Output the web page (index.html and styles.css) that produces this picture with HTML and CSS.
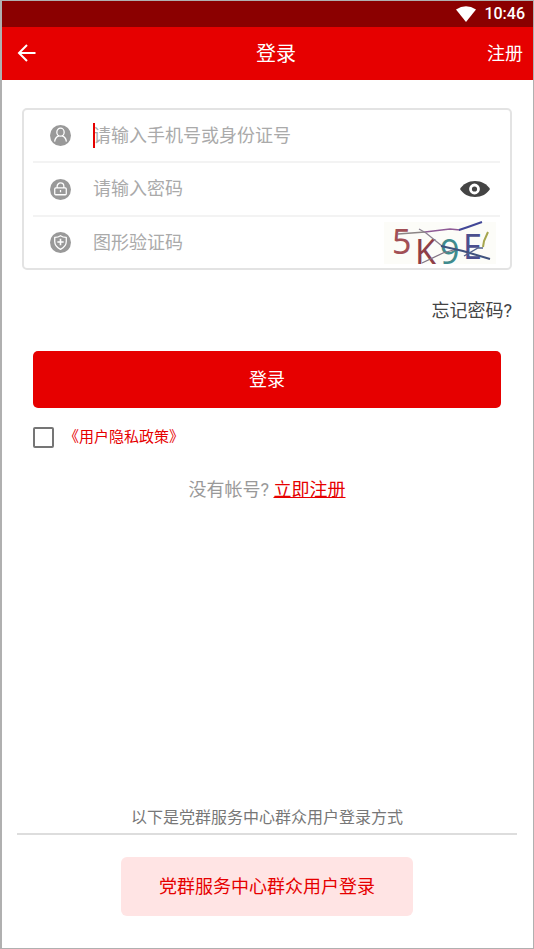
FILE: index.html
```html
<!DOCTYPE html>
<html lang="zh-CN">
<head>
<meta charset="utf-8">
<meta name="viewport" content="width=device-width, initial-scale=1">
<title>登录</title>
<link rel="stylesheet" href="styles.css">
</head>
<body>
<div class="status">
  <svg width="20" height="16" viewBox="0 0 20 16" aria-hidden="true"><path d="M0 3.600Q10-3.200 20 3.600L10 16Z" fill="#fff"/></svg>
  <span>10:46</span>
</div>
<header class="bar">
  <button class="back" type="button" aria-label="返回">
    <svg width="20" height="20" viewBox="0 0 20 20" fill="none" stroke="#fff" stroke-width="2"><path d="M18.500 9H2.500M10 1L2 9l8 8"/></svg>
  </button>
  <h1>登录</h1>
  <a href="#register">注册</a>
</header>
<main>
  <form>
    <div class="fields">
      <div class="row">
        <label for="account" aria-label="手机号或身份证号">
          <svg class="icon" viewBox="0 0 20 20"><circle cx="10" cy="10" r="10" fill="#999"/><g fill="none" stroke="#fff" stroke-width="1.200" stroke-linecap="round"><ellipse cx="10" cy="6.800" rx="3.500" ry="3.800"/><path d="M8.300 10.300C6 11.300 4.800 12.800 4.500 15.300M11.700 10.300c2.300 1 3.500 2.500 3.800 5"/></g></svg>
        </label>
        <div class="entry">
          <input id="account" type="text" placeholder="请输入手机号或身份证号">
          <span class="caret"></span>
        </div>
      </div>
      <div class="row">
        <label for="password" aria-label="密码">
          <svg class="icon" viewBox="0 0 20 20"><circle cx="10" cy="10" r="10" fill="#999"/><g fill="none" stroke="#fff" stroke-width="1.200" stroke-linejoin="round"><rect x="4.500" y="8.500" width="11" height="6.500" rx="1"/><path d="M6.800 8.500V7a3.200 3.200 0 0 1 6.400 0v1.500M10 10.500v2.200"/></g></svg>
        </label>
        <div class="entry"><input id="password" type="password" placeholder="请输入密码"></div>
        <button class="eye" type="button" aria-label="显示密码">
          <svg width="30" height="16" viewBox="0 0 30 16"><path d="M0 8C3 3 8.500 0 15 0s12 3 15 8c-3 5-8.500 8-15 8S3 13 0 8Z" fill="#444"/><circle cx="14.500" cy="8" r="4" fill="#444" stroke="#fff" stroke-width="2.800"/></svg>
        </button>
      </div>
      <div class="row">
        <label for="captcha" aria-label="图形验证码">
          <svg class="icon" viewBox="0 0 20 20"><circle cx="10" cy="10" r="10" fill="#999"/><g fill="none" stroke="#fff" stroke-width="1.200" stroke-linejoin="round"><path d="M10 3.500c1.600 1.200 3.400 1.600 5.500 1.600V9c0 3.600-2.200 5.800-5.500 7.500C6.700 14.800 4.500 12.600 4.500 9V5.100c2.100 0 3.900-.400 5.500-1.600Z"/><path d="M10 6.500v6M7 9.500h6" stroke-width="1.500"/></g></svg>
        </label>
        <div class="entry"><input id="captcha" type="text" placeholder="图形验证码"></div>
        <svg class="code" width="112" height="42" viewBox="0 0 112 42" role="img" aria-label="验证码图片">
          <rect width="112" height="42" fill="#fcfcf8"/>
          <g class="code-text">
            <text x="8" y="32" fill="#a14f55">5</text>
            <text x="31" y="42" fill="#8e3f48">K</text>
            <text x="56" y="42" fill="#408b8d">9</text>
            <text x="79" y="37" fill="#4b4f8e">E</text>
          </g>
          <g fill="none" stroke-width="1.300">
            <path d="M14 12l27-2" stroke="#8b8585"/>
            <path d="M41 10l25-3 10 1" stroke="#8f5b96"/>
            <path d="M75 8l9-3 14-5" stroke="#424797" stroke-width="2"/>
            <path d="M35 7l7 4 16 13" stroke="#8b8190"/>
            <path d="M38 41l21-10 14-4" stroke="#817384"/>
            <path d="M57 24l22 5 27 8" stroke="#40527d" stroke-width="2"/>
            <path d="M80 34l14-8h5" stroke="#51608b"/>
            <path d="M99 25l1-6 4-9" stroke="#a6a64d" stroke-width="2"/>
          </g>
        </svg>
      </div>
    </div>
    <a class="forgot" href="#forgot">忘记密码?</a>
    <div class="actions">
      <button class="submit" type="button">登录</button>
      <div class="policy">
        <input id="agree" type="checkbox" aria-label="同意用户隐私政策">
        <label for="agree">《用户隐私政策》</label>
      </div>
    </div>
  </form>
  <p class="signup">没有帐号? <a href="#register">立即注册</a></p>
</main>
<footer>
  <p>以下是党群服务中心群众用户登录方式</p>
  <button type="button">党群服务中心群众用户登录</button>
</footer>
</body>
</html>
```
FILE: styles.css
```css
* {
  box-sizing: border-box;
}

body {
  display: flex;
  flex-direction: column;
  min-height: 100vh;
  margin: 0;
  border: 1px solid #b0b0b0;
  border-left-width: 2px;
  background: #fff;
  color: #444;
  font: 18px/26px Roboto, "Noto Sans CJK SC", sans-serif;
}

button,
input {
  margin: 0;
  padding: 0;
  border: 0;
  background: none;
  font: inherit;
}

svg {
  display: block;
}

h1,
p {
  margin: 0;
}

.status {
  display: flex;
  align-items: center;
  justify-content: flex-end;
  gap: 8px;
  height: 26px;
  padding-right: 8px;
  background: #8b0000;
  color: #fff;
  font-size: 16px;
  font-weight: 500;
}

.bar {
  display: grid;
  grid-template-columns: 1fr auto 1fr;
  align-items: center;
  height: 53px;
  padding: 0 10px 0 27px;
  background: #e60000;
  color: #fff;
}

.bar h1 {
  font-size: 20px;
  font-weight: 400;
}

.bar a {
  justify-self: end;
  color: #fff;
  text-decoration: none;
}

.back {
  justify-self: start;
  margin-left: -12px;
}

main {
  flex: 1;
  padding: 28px 21px 0 20px;
}

form {
  display: flex;
  flex-direction: column;
}

.fields {
  padding: 0 10px 0 9px;
  border: 2px solid #e3e3e3;
  border-radius: 5px;
}

.row {
  display: flex;
  align-items: center;
  height: 54px;
  padding-left: 17px;
  border-bottom: 2px solid #f3f3f3;
}

.row:first-child {
  height: 53px;
}

.row:last-child {
  height: 51px;
  border-bottom: 0;
}

.icon {
  width: 21px;
  height: 21px;
  margin-right: 22px;
}

.entry {
  position: relative;
  flex: 1;
}

.entry input {
  display: block;
  width: 100%;
  height: 26px;
  outline: 0;
}

.entry input::placeholder {
  color: #aaa;
  opacity: 1;
}

.caret {
  position: absolute;
  top: 0;
  left: 0;
  width: 2px;
  height: 25px;
  background: #e60000;
}

.eye {
  margin-right: 10px;
}

.code {
  margin-right: 4px;
  overflow: visible;
}

.code-text {
  font: 34px "Noto Sans", sans-serif;
}

.forgot {
  align-self: flex-end;
  margin-top: 28px;
  color: #444;
  text-decoration: none;
}

.actions {
  padding: 27px 11px 0;
}

.submit {
  width: 100%;
  height: 57px;
  border-radius: 5px;
  background: #e60000;
  color: #fff;
}

.policy {
  display: flex;
  align-items: center;
  gap: 10px;
  margin-top: 16px;
  color: #e60000;
  font-size: 15px;
}

.policy input {
  width: 21px;
  height: 21px;
  border: 2px solid #757575;
  border-radius: 2px;
  appearance: none;
}

.policy input:checked {
  background: #e60000;
}

.signup {
  margin-top: 27px;
  color: #999;
  text-align: center;
}

.signup a {
  color: #e60000;
}

footer {
  display: flex;
  flex-direction: column;
  align-items: center;
  gap: 22px;
  padding: 0 16px 32px 15px;
}

footer p {
  align-self: stretch;
  padding-bottom: 2px;
  border-bottom: 2px solid #ddd;
  color: #777;
  font-size: 16px;
  text-align: center;
}

footer button {
  height: 59px;
  padding: 0 38px;
  border-radius: 6px;
  background: #ffe4e4;
  color: #e60000;
}
```
